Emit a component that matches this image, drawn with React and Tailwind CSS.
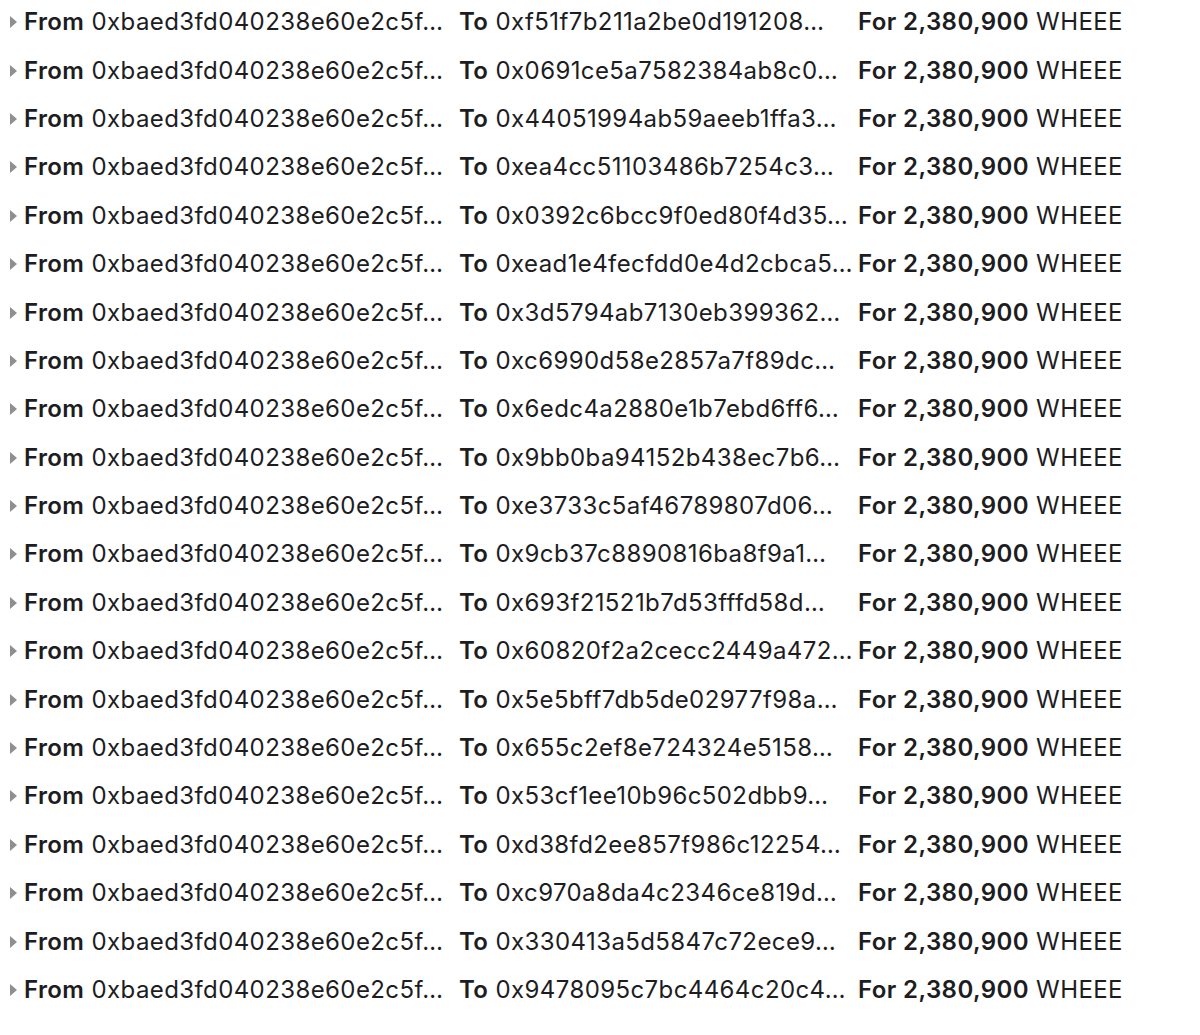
const recipients = [
  "0xf51f7b211a2be0d191208…",
  "0x0691ce5a7582384ab8c0…",
  "0x44051994ab59aeeb1ffa3…",
  "0xea4cc51103486b7254c3…",
  "0x0392c6bcc9f0ed80f4d35…",
  "0xead1e4fecfdd0e4d2cbca5…",
  "0x3d5794ab7130eb399362…",
  "0xc6990d58e2857a7f89dc…",
  "0x6edc4a2880e1b7ebd6ff6…",
  "0x9bb0ba94152b438ec7b6…",
  "0xe3733c5af46789807d06…",
  "0x9cb37c8890816ba8f9a1…",
  "0x693f21521b7d53fffd58d…",
  "0x60820f2a2cecc2449a472…",
  "0x5e5bff7db5de02977f98a…",
  "0x655c2ef8e724324e5158…",
  "0x53cf1ee10b96c502dbb9…",
  "0xd38fd2ee857f986c12254…",
  "0xc970a8da4c2346ce819d…",
  "0x330413a5d5847c72ece9…",
  "0x9478095c7bc4464c20c4…",
];

const Transfer = ({ to }) => (
  <div className="flex items-center h-[48.4px] whitespace-nowrap">
    {/* disclosure marker */}
    <span className="w-[14px] flex items-center">
      <svg width="7" height="12" viewBox="0 0 7 12">
        <path d="M0 0 L7 6 L0 12 Z" fill="#8e8e93" />
      </svg>
    </span>
    <span className="w-[435px]">
      <span className="font-semibold">From</span> 0xbaed3fd040238e60e2c5f…
    </span>
    <span className="w-[399px]">
      <span className="font-semibold">To</span> {to}
    </span>
    <span>
      <span className="font-semibold">For 2,380,900</span> WHEEE
    </span>
  </div>
);

const App = () => {
  return (
    <div className="min-h-screen bg-white text-[#1d1d1f] text-[24px] tracking-[0.4px] font-['Inter',sans-serif] pl-[10px] -mt-[2px]">
      {recipients.map((to, i) => (
        <Transfer key={i} to={to} />
      ))}
    </div>
  );
};

export default App;
